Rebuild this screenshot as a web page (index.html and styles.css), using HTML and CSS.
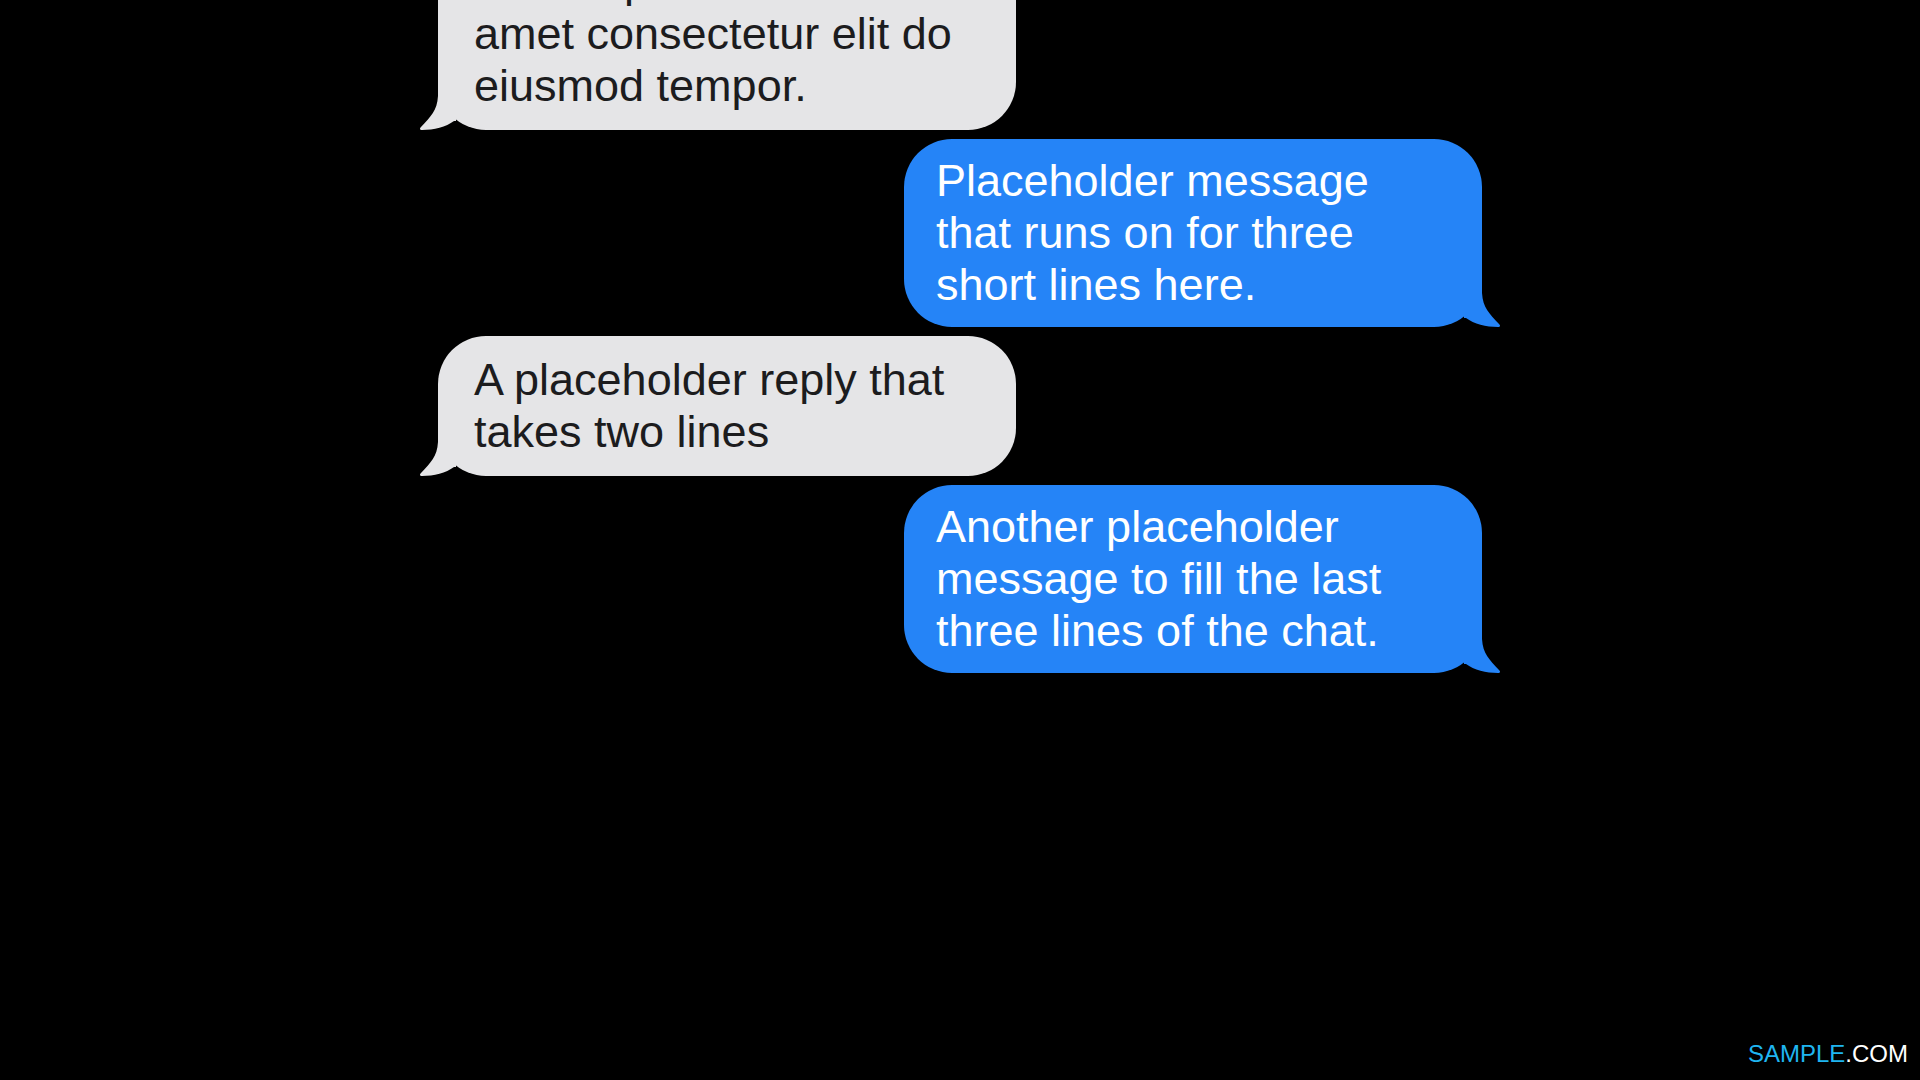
FILE: index.html
```html
<!DOCTYPE html>
<html lang="en">
<head>
    <meta charset="UTF-8">
    <meta name="viewport" content="width=device-width, initial-scale=1.0">
    <title>Messages</title>
    <link rel="stylesheet" href="styles.css">
</head>
<body>
    <main class="chat">
        <div class="bubble received first">
            <p>Lorem ipsum dolor sit amet consectetur elit do eiusmod tempor.</p>
            <svg class="tail" viewBox="0 0 36 62" aria-hidden="true"><path d="M18 0V28C17 43 11 48 1 59C-1 61 0 62 2 62C14 62 26 59 34 53L36 53V0Z"/></svg>
        </div>
        <div class="bubble sent">
            <p>Placeholder message that runs on for three short lines here.</p>
            <svg class="tail" viewBox="0 0 36 62" aria-hidden="true"><path d="M18 0V28C19 43 25 48 35 59C37 61 36 62 34 62C22 62 10 59 2 53L0 53V0Z"/></svg>
        </div>
        <div class="bubble received">
            <p>A placeholder reply that takes two lines</p>
            <svg class="tail" viewBox="0 0 36 62" aria-hidden="true"><path d="M18 0V28C17 43 11 48 1 59C-1 61 0 62 2 62C14 62 26 59 34 53L36 53V0Z"/></svg>
        </div>
        <div class="bubble sent">
            <p>Another placeholder message to fill the last three lines of the chat.</p>
            <svg class="tail" viewBox="0 0 36 62" aria-hidden="true"><path d="M18 0V28C19 43 25 48 35 59C37 61 36 62 34 62C22 62 10 59 2 53L0 53V0Z"/></svg>
        </div>
    </main>
    <footer class="brand"><span>SAMPLE</span>.COM</footer>
</body>
</html>
```
FILE: styles.css
```css
* {
    box-sizing: border-box;
}
body {
    display: flex;
    flex-direction: column;
    min-height: 100vh;
    margin: 0;
    overflow-x: hidden;
    background-color: #000;
    font-family: "Liberation Sans", Arial, sans-serif;
}
.chat {
    display: flex;
    flex: 1;
    flex-direction: column;
    gap: 9px;
    width: 100%;
    max-width: 1044px;
    margin: 0 auto;
}
.bubble {
    position: relative;
    width: 100%;
    max-width: 578px;
    padding: 16px 32px;
    border-radius: 48px;
    font-size: 45px;
    line-height: 52px;
}
.bubble p {
    margin: 0;
}
.received {
    align-self: flex-start;
    padding: 18px 36px;
    background-color: #e5e5e7;
    color: #1c1c1e;
    fill: #e5e5e7;
}
.sent {
    align-self: flex-end;
    background-color: #2584f7;
    color: #fff;
    fill: #2584f7;
}
/* the oldest message is scrolled partly off the top */
.first {
    margin-top: -62px;
}
.tail {
    position: absolute;
    bottom: 0;
    width: 36px;
    height: 62px;
}
.received .tail {
    left: -18px;
}
.sent .tail {
    right: -18px;
}
.brand {
    padding: 12px;
    color: #fff;
    font-family: "Liberation Sans Narrow", "Liberation Sans", sans-serif;
    font-size: 24px;
    text-align: right;
}
.brand span {
    color: #1fb5f0;
}
```
